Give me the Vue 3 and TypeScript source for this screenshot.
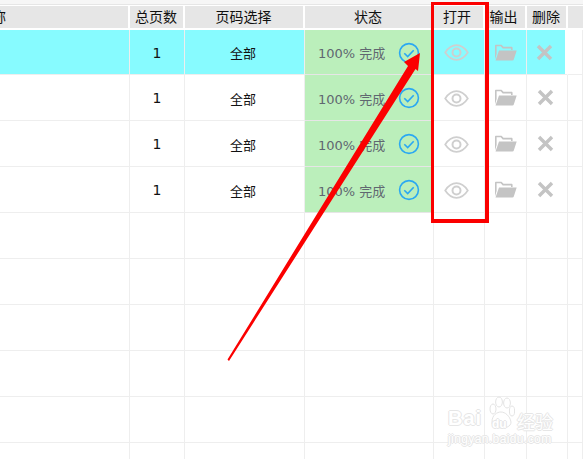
<script setup lang="ts">
interface Row { done: boolean; active: boolean }
const rows: Row[] = Array.from({ length: 10 }, (_, i) => ({ done: i < 4, active: i === 0 }))
const headers: string[] = ['称', '总页数', '页码选择', '状态', '打开', '输出', '删除', '']
</script>

<template>
  <div class="page">
    <div class="top-strip"></div>
    <div class="head grid">
      <div v-for="(h, i) in headers" :key="i" class="hcell" :class="'h' + i">{{ h }}</div>
    </div>
    <div v-for="(r, i) in rows" :key="i" class="row grid" :class="{ active: r.active, first: i === 0 }">
      <div class="cell"></div>
      <div class="cell num">{{ r.done ? 1 : '' }}</div>
      <div class="cell range">{{ r.done ? '全部' : '' }}</div>
      <div class="cell status" :class="{ ok: r.done }">
        <template v-if="r.done">
          <span class="pct">100% 完成</span>
          <svg class="check" width="22" height="22" viewBox="0 0 22 22">
            <circle cx="11" cy="11" r="9.4" fill="none" stroke="#2aa8f2" stroke-width="1.6" />
            <path d="M6.3 11.2l3.4 3.4 6-6.4" fill="none" stroke="#2aa8f2" stroke-width="1.6" />
          </svg>
        </template>
      </div>
      <div class="cell icon open">
        <svg v-if="r.done" width="25" height="17" viewBox="0 0 25 17">
          <path d="M1.2 8.5C4.5 3.5 8.300 1.200 12.500 1.200S20.500 3.500 23.800 8.500C20.500 13.500 16.700 15.800 12.500 15.800S4.500 13.500 1.200 8.500Z" fill="none" stroke="#cfcfcf" stroke-width="1.7" />
          <circle cx="12.500" cy="8.500" r="4" fill="none" stroke="#cfcfcf" stroke-width="2" />
        </svg>
      </div>
      <div class="cell icon folder">
        <svg v-if="r.done" width="23" height="17" viewBox="0 0 23 17">
          <path d="M1 15.500V1.700C1 1 1.400 .7 2 .7H7.500L9.500 2.800H17.500C18.200 2.800 18.600 3.200 18.600 3.900V6H17V4.400H8.700L6.800 2.300H2.600V10Z" fill="#c4c4c4" />
          <path d="M5 6.600H22.700L19.800 15.500C19.600 16.200 19.100 16.500 18.400 16.500H1.500Z" fill="#c4c4c4" />
        </svg>
      </div>
      <div class="cell icon del">
        <svg v-if="r.done" width="17" height="17" viewBox="0 0 17 17">
          <path d="M2 2L15 15M15 2L2 15" fill="none" stroke="#c4c4c4" stroke-width="3.4" />
        </svg>
      </div>
      <div class="cell"></div>
    </div>

    <div class="watermark" aria-label="Baidu 经验">
      <svg class="paw" width="28" height="34" viewBox="0 0 28 34">
        <g fill="none" stroke="#e4e4e4" stroke-width="1">
          <ellipse cx="6" cy="13" rx="3" ry="5" />
          <ellipse cx="12" cy="6" rx="3.400" ry="5" />
          <ellipse cx="20" cy="7" rx="3.400" ry="5" />
          <ellipse cx="25" cy="15" rx="2.600" ry="5" />
          <path d="M5 26C5 19 10 16 14 16S23 20 24 26C24 31 18 32 14 32S5 31 5 26Z" />
        </g>
      </svg>
      <span class="wm-bai">Bai</span>
      <span class="wm-du">du</span>
      <span class="wm-cn">经验</span>
      <span class="wm-url">jingyan.baidu.com</span>
    </div>

    <div class="red-box"></div>
    <svg class="arrow" width="583" height="459" viewBox="0 0 583 459">
      <polygon points="227.500,359.500 408,66 404,62 420,53 418,71 415.500,69 229,361" fill="#fb0000" />
    </svg>
  </div>
</template>

<style>
html, body { margin: 0; padding: 0; overflow: hidden; background: #fff; }
</style>

<style scoped>
.page {
  position: relative;
  width: 583px;
  height: 459px;
  overflow: hidden;
  background: #fff;
  color: #111;
  font-family: "DejaVu Sans", "Noto Sans CJK SC", sans-serif;
  font-size: 13px;
}
.grid {
  display: grid;
  grid-template-columns: 130px 55px 120px 129px 51px 42px 41px 1fr;
}
.top-strip {
  height: 4px;
  background: #f6f6f6;
  border-bottom: 1px solid #e6e6e6;
}
.head {
  padding: 1px 0 2px;
}
.hcell {
  box-sizing: border-box;
  height: 22px;
  line-height: 22px;
  margin-right: 2px;
  padding-right: 1px;
  background: #e6e6e6;
  text-align: center;
  font-size: 14px;
  white-space: nowrap;
}
.h0 {
  display: flex;
  justify-content: flex-end;
  padding-right: 122px;
}
.h4 {
  padding-right: 3px;
}
.h5 {
  padding-right: 3px;
}
.h7 {
  margin-right: 0;
}
.row {
  height: 46px;
}
.row.first {
  height: 45px;
}
.cell {
  display: flex;
  align-items: center;
  justify-content: center;
  box-sizing: border-box;
  padding-top: 1px;
  border-right: 1px solid #eeeeee;
  border-bottom: 1px solid #eeeeee;
}
.num {
  font-size: 14px;
}
.range {
  padding-right: 3px;
}
.open {
  padding-right: 6px;
}
.folder,
.del {
  padding-top: 0;
}
.active .cell {
  background: #87fbff;
}
.active .cell:last-child {
  background: #fff;
}
.active .cell.del {
  padding-right: 2px;
  background: #87fbff;
  background-clip: content-box;
  border-right-color: #fff;
  border-bottom-color: #eee;
}
.del svg {
  margin-right: 3px;
}
.status {
  justify-content: flex-start;
}
.status.ok,
.active .cell.status.ok {
  background: #bbefbb;
  padding-left: 13px;
  border-bottom-color: #e6e6e6;
}
.pct {
  color: #5f6770;
  width: 80px;
  white-space: nowrap;
}
.check {
  flex: none;
}
.watermark {
  position: absolute;
  left: 445px;
  top: 396px;
  width: 125px;
  height: 54px;
  font-family: "Liberation Sans", "Noto Sans CJK SC", sans-serif;
  color: #fff;
}
.paw {
  position: absolute;
  left: 42px;
  top: 0;
}
.wm-bai,
.wm-du,
.wm-cn,
.wm-url {
  position: absolute;
  text-shadow: 1px 0 0 #e6e6e6, -1px 0 0 #e6e6e6, 0 1px 0 #e6e6e6, 0 -1px 0 #e6e6e6;
  white-space: nowrap;
}
.wm-bai {
  left: 3px;
  top: 11px;
  font-size: 20px;
  font-weight: 700;
  letter-spacing: 1px;
}
.wm-du {
  left: 47px;
  top: 21px;
  font-size: 12px;
  font-weight: 700;
}
.wm-cn {
  left: 72px;
  top: 12px;
  font-size: 18px;
}
.wm-url {
  left: 3px;
  top: 36px;
  font-size: 12px;
  letter-spacing: .4px;
}
.red-box {
  position: absolute;
  left: 431px;
  top: 2px;
  width: 58px;
  height: 221px;
  box-sizing: border-box;
  border: 3px solid #fb0000;
  border-right-width: 4px;
  border-bottom-width: 4px;
}
.arrow {
  position: absolute;
  left: 0;
  top: 0;
  pointer-events: none;
}
</style>
